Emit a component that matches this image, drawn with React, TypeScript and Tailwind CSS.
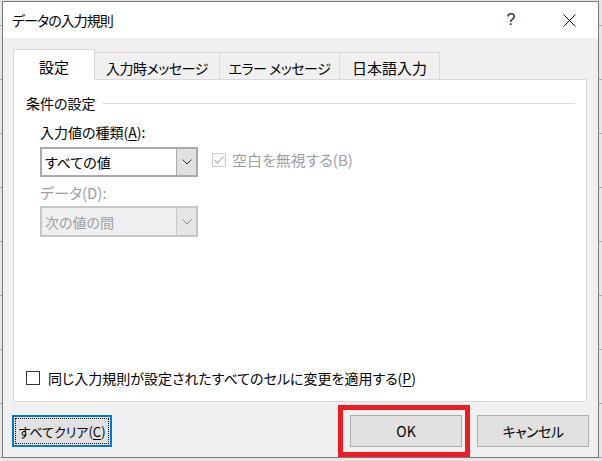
import React from "react";

function Chevron({ color }: { color: string }) {
  return (
    <svg width="10" height="6" viewBox="0 0 10 6" fill="none">
      <path d="M0.5 0.5 L5 5 L9.5 0.5" stroke={color} strokeWidth="1" />
    </svg>
  );
}

function Select({ text, disabled }: { text: string; disabled?: boolean }) {
  return (
    <div
      className={
        disabled
          ? "flex w-[158px] h-[31px] border-2 border-[#c6c6c6] bg-[#efefef]"
          : "flex w-[158px] h-[30px] border-2 border-[#aaaaaa] bg-white"
      }
    >
      <div
        className={
          disabled
            ? "flex-1 flex items-center pl-[3px] text-[#9e9e9e] leading-none text-[14px]"
            : "flex-1 flex items-center pl-[3px] text-black leading-none text-[14px]"
        }
      >
        {text}
      </div>
      <div
        className={
          disabled
            ? "w-[20px] flex items-center justify-center border-l border-[#c6c6c6] bg-[#e6e6e6]"
            : "w-[20px] flex items-center justify-center border-l border-[#aaaaaa] bg-[#e1e1e1]"
        }
      >
        <Chevron color={disabled ? "#8a8a8a" : "#333333"} />
      </div>
    </div>
  );
}

export default function App() {
  return (
    <div className="relative w-[602px] h-[461px] overflow-hidden bg-[#e6e6e6] bg-[repeating-linear-gradient(to_bottom,transparent_0px,transparent_25px,#a8a8a8_25px,#a8a8a8_26px,transparent_26px,transparent_54px)] pt-px pl-[2px] [font-family:'Noto_Sans_CJK_JP','Noto_Sans',sans-serif] [font-feature-settings:'palt'] text-[14px] text-black">
      <div className="flex flex-col w-[597px] h-[457px] border border-[#7a7a7a] bg-[#f0f0f0]">
        {/* Title bar */}
        <div className="flex items-center h-[36px] bg-white shrink-0">
          <span className="ml-[9px] leading-none text-[14px] tracking-[-1px] whitespace-nowrap">データの入力規則</span>
          <span className="ml-auto w-[46px] flex justify-center text-[16px] leading-none [font-family:'Liberation_Sans',sans-serif] text-[#222]">
            ?
          </span>
          <div className="ml-[12px] mr-[6px] w-[46px] flex justify-center">
            <svg width="13" height="13" viewBox="0 0 13 13">
              <path d="M0.5 0.5 L12.5 12.5 M12.5 0.5 L0.5 12.5" stroke="#111" strokeWidth="1" />
            </svg>
          </div>
        </div>

        {/* Body */}
        <div className="flex flex-col flex-1 pt-[11px]">
          {/* Tabs */}
          <div className="flex items-end h-[30px] ml-[10px] relative z-10">
            <div className="w-[82px] h-[31px] -mb-px flex items-center justify-center bg-white border-l border-t border-r border-[#d9d9d9] pt-[2px] leading-none text-[15px] whitespace-nowrap">
              設定
            </div>
            <div className="w-[125px] h-[27px] flex items-center justify-center bg-[#f0f0f0] border-t border-r border-[#d9d9d9] pt-[3px] leading-none tracking-[-0.5px] whitespace-nowrap">
              入力時メッセージ
            </div>
            <div className="w-[120px] h-[27px] flex items-center justify-center bg-[#f0f0f0] border-t border-r border-[#d9d9d9] pt-[3px] leading-none tracking-[-0.5px] whitespace-nowrap">
              エラー メッセージ
            </div>
            <div className="w-[100px] h-[27px] flex items-center justify-center bg-[#f0f0f0] border-t border-r border-[#d9d9d9] pt-[3px] leading-none text-[15px] whitespace-nowrap">
              日本語入力
            </div>
          </div>

          {/* Panel */}
          <div className="flex flex-col h-[323px] ml-[10px] w-[574px] border border-[#d9d9d9] bg-white">
            <div className="flex items-center mt-[16px] ml-[12px] mr-[11px] h-[14px]">
              <span className="leading-[14px] whitespace-nowrap">条件の設定</span>
              <div className="flex-1 h-px bg-[#dcdcdc] ml-[6px]" />
            </div>

            <div className="ml-[26px] mt-[13px] h-[18px] leading-[18px] whitespace-nowrap">
              入力値の種類(<span className="underline underline-offset-2">A</span>):
            </div>
            <div className="ml-[26px] mt-[6px] flex items-start">
              <Select text="すべての値" />
              <div className="ml-[14px] mt-[5px] flex items-center">
                <div className="w-[14px] h-[14px] border border-[#cccccc] bg-white flex items-center justify-center">
                  <svg width="12" height="12" viewBox="0 0 12 12" fill="none">
                    <path d="M1.5 6 L4.5 9 L10.5 2.5" stroke="#bcbcbc" strokeWidth="1.3" />
                  </svg>
                </div>
                <span className="ml-[6px] leading-none text-[#a0a0a0] text-[15px] whitespace-nowrap">空白を無視する(B)</span>
              </div>
            </div>

            <div className="ml-[26px] mt-[7px] h-[18px] leading-[18px] text-[#a0a0a0] text-[15px] whitespace-nowrap">データ(D):</div>
            <div className="ml-[26px] mt-[4px]">
              <Select text="次の値の間" disabled />
            </div>

            <div className="mt-auto mb-[14px] ml-[12px] flex items-center h-[18px]">
              <div className="w-[14px] h-[14px] border border-[#333333] bg-white" />
              <span className="ml-[8px] leading-none whitespace-nowrap">
                同じ入力規則が設定されたすべてのセルに変更を適用する(<span className="underline underline-offset-2">P</span>)
              </span>
            </div>
          </div>

          {/* Buttons */}
          <div className="flex items-start mt-[13px]">
            <div className="ml-[9px] w-[100px] h-[32px] border-2 border-[#0078d7] bg-[#e1e1e1] p-px">
              <div className="h-full border border-dotted border-black flex items-center justify-center leading-none text-[13px] whitespace-nowrap">
                すべてクリア(<span className="underline underline-offset-2">C</span>)
              </div>
            </div>
            <div className="ml-auto w-[112px] h-[32px] border border-[#adadad] bg-[#e1e1e1] flex items-center justify-center leading-none">
              OK
            </div>
            <div className="ml-[15px] mr-[9px] w-[112px] h-[32px] border border-[#adadad] bg-[#e1e1e1] flex items-center justify-center leading-none tracking-[-0.5px] whitespace-nowrap">
              キャンセル
            </div>
          </div>
        </div>
      </div>

      {/* Red highlight annotation */}
      <div className="absolute left-[338px] top-[405px] w-[132px] h-[52px] border-[5px] border-[#ed1c24]" />
    </div>
  );
}
